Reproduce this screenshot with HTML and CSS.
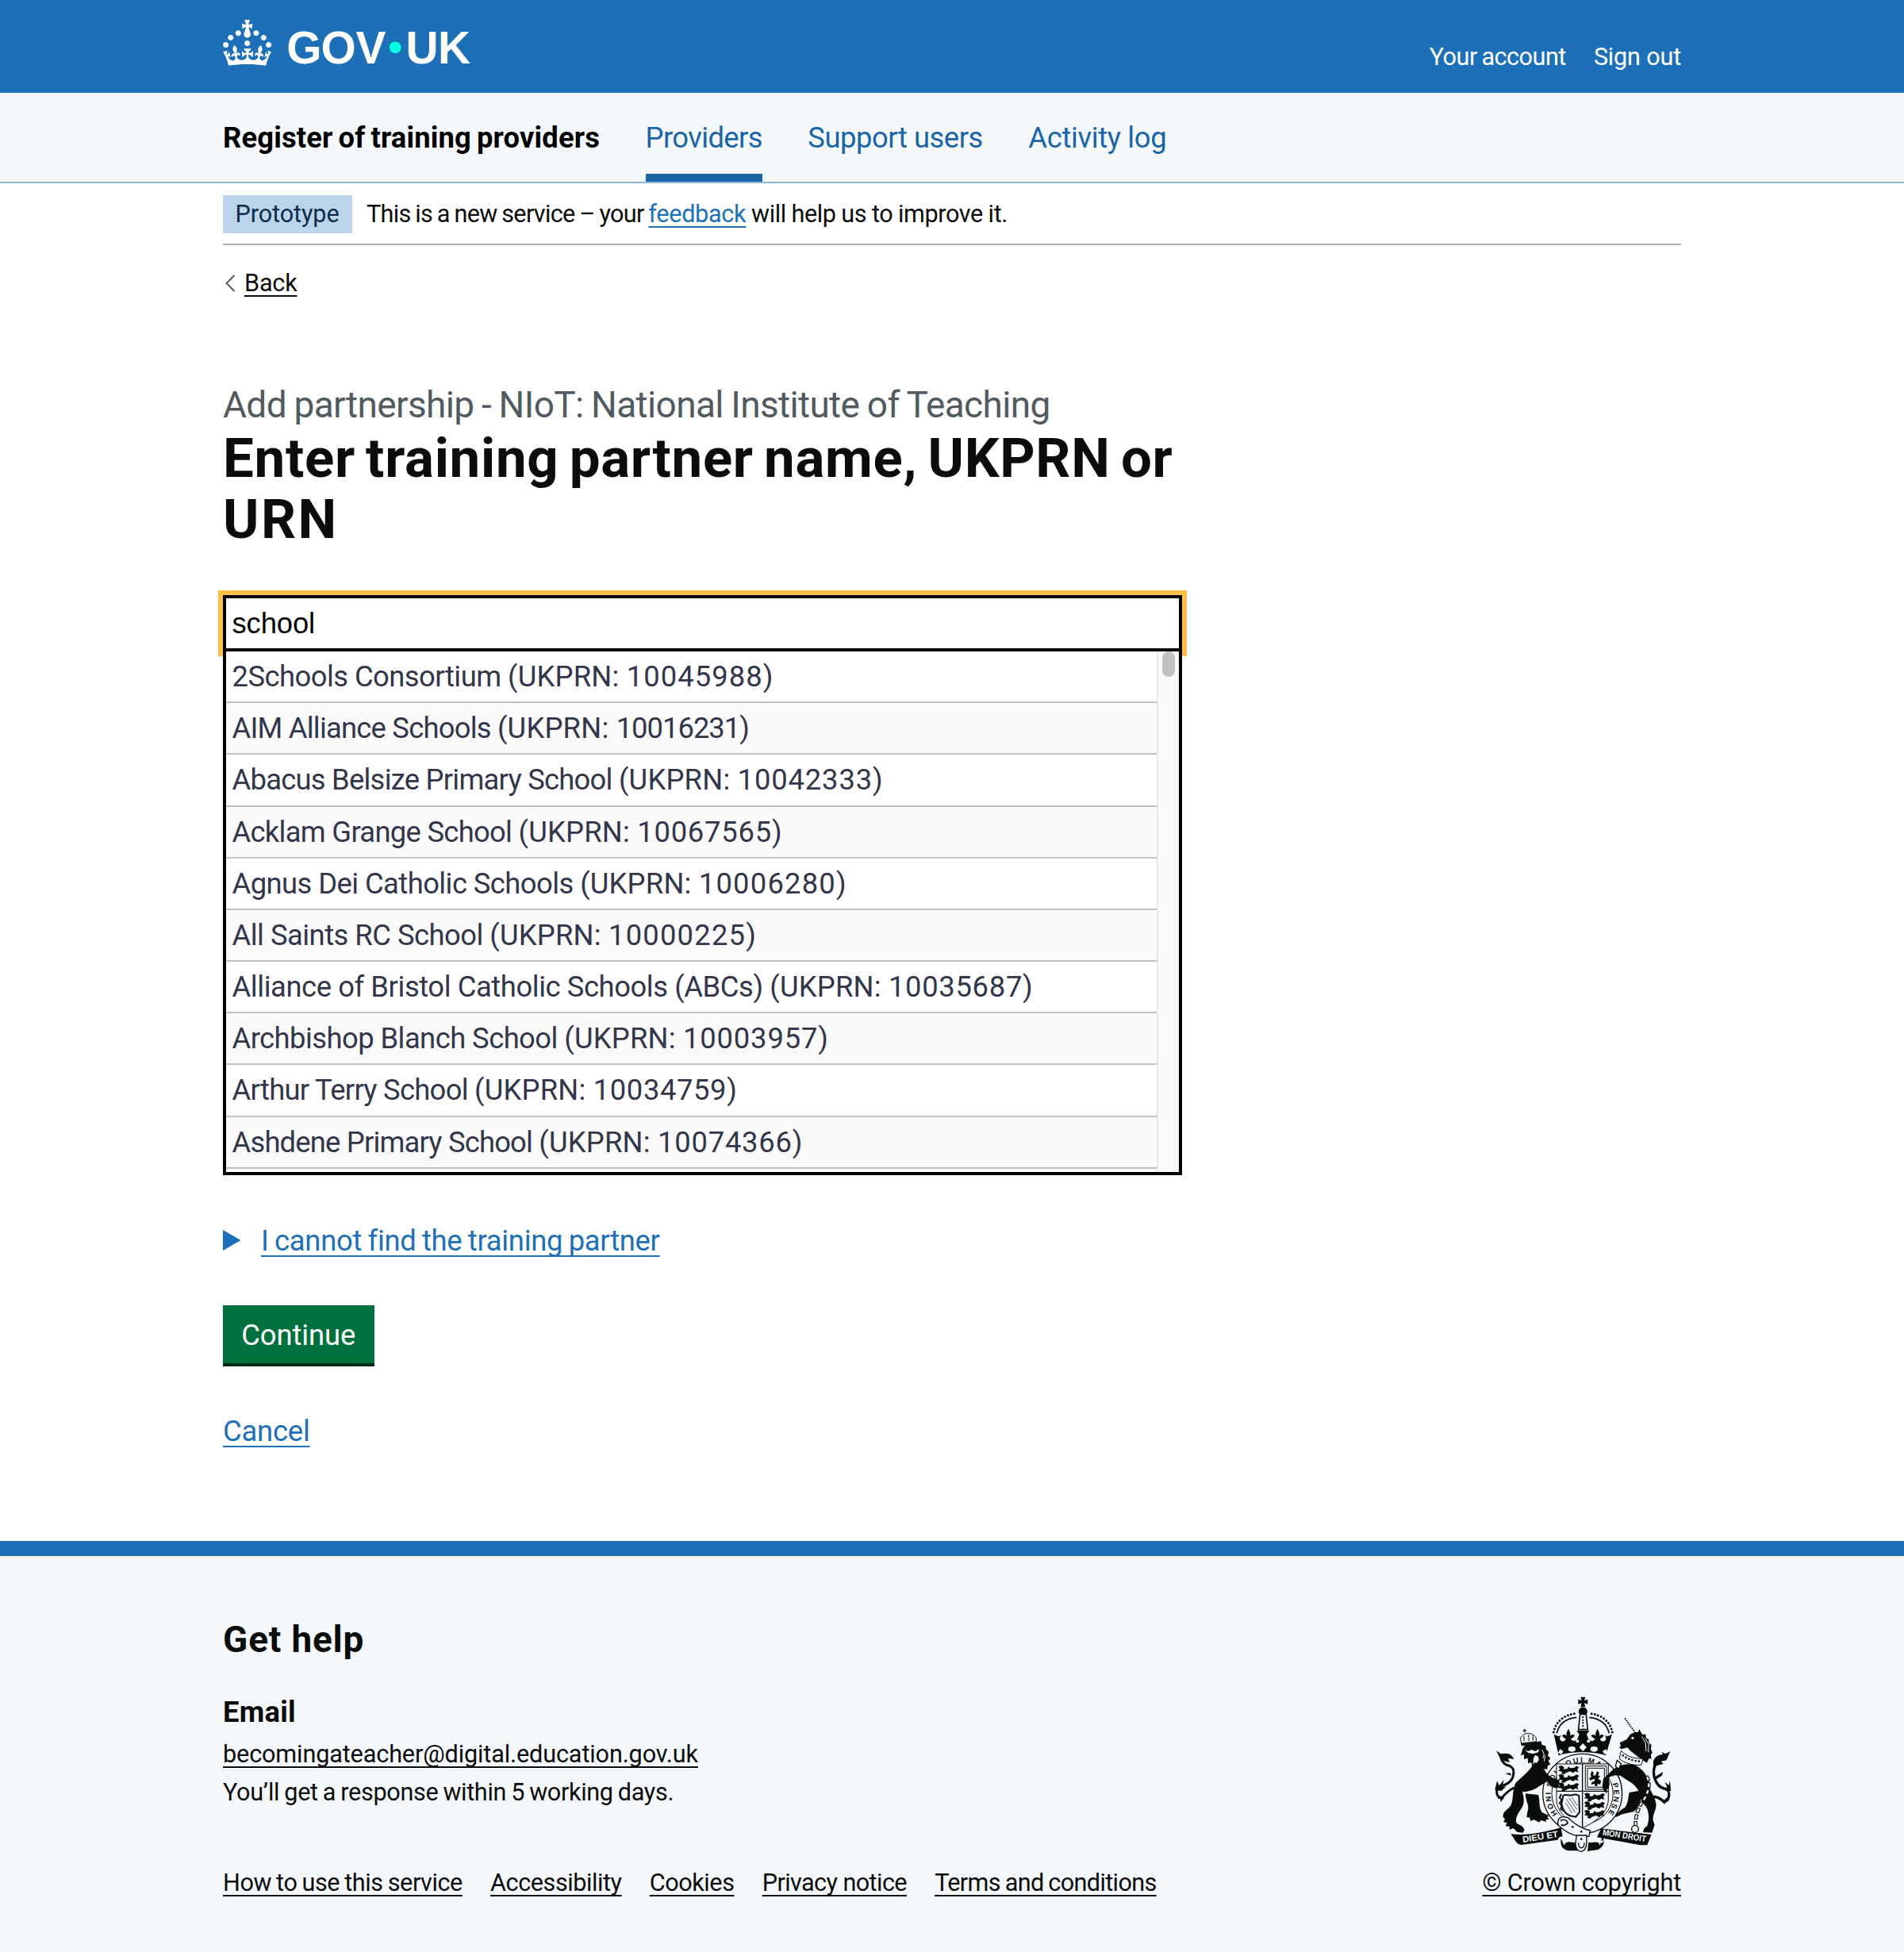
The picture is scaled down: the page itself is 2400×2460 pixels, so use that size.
FILE: index.html
```
<!DOCTYPE html>
<html lang="en">
<head>
<meta charset="utf-8">
<title>Enter training partner name, UKPRN or URN - Register of training providers</title>
<link rel="stylesheet" href="styles.css">
</head>
<body>
<header class="header">
  <div class="container header-row">
    <svg class="logo" viewBox="0 0 320 60" role="img" aria-label="GOV.UK">
      <path transform="scale(1.915)" fill="#fff" d="M22.6 10.4c-1 .4-2-.1-2.4-1-.4-.9.1-2 1-2.4.9-.4 2 .1 2.4 1s-.1 2-1 2.4m-5.9 6.7c-.9.4-2-.1-2.4-1-.4-.9.1-2 1-2.4.9-.4 2 .1 2.4 1s-.1 2-1 2.4m10.8-3.7c-1 .4-2-.1-2.4-1-.4-.9.1-2 1-2.4.9-.4 2 .1 2.4 1s0 2-1 2.4m3.3 4.8c-1 .4-2-.1-2.4-1-.4-.9.1-2 1-2.4.9-.4 2 .1 2.4 1s-.1 2-1 2.4M17 4.7l2.3 1.2V2.5l-2.3.7-.2-.2.9-3h-3.4l.9 3-.2.2c-.1.1-2.3-.7-2.3-.7v3.4L15 4.7c.1.1.1.2.2.2l-1.3 4c-.1.2-.1.4-.1.6 0 1.1.8 2 1.9 2.2h.7c1-.2 1.9-1.1 1.9-2.1 0-.2 0-.4-.1-.6l-1.3-4c-.1-.2 0-.2.1-.3m-7.6 5.7c.9.4 2-.1 2.4-1 .4-.9-.1-2-1-2.4-.9-.4-2 .1-2.4 1s0 2 1 2.4m-5 3c.9.4 2-.1 2.4-1 .4-.9-.1-2-1-2.4-.9-.4-2 .1-2.4 1s.1 2 1 2.4m-3.2 4.8c.9.4 2-.1 2.4-1 .4-.9-.1-2-1-2.4-.9-.4-2 .1-2.4 1s0 2 1 2.4m14.8 11c4.4 0 8.6.3 12.3.8 1.1-4.5 2.4-7 3.7-8.8l-2.5-.9c.2 1.3.3 1.9 0 2.7-.4-.4-.8-1.1-1.1-2.3l-1.2 4c.7-.5 1.3-.8 2-.9-1.1 2.5-2.6 3.1-3.5 3-1.1-.2-1.7-1.2-1.5-2.1.3-1.2 1.5-1.5 2.1-.1 1.1-2.3-.8-3-2-2.3 1.9-1.9 2.1-3.5.6-5.6-2.1 1.6-2.1 3.2-1.2 5.5-1.2-1.4-3.2-.6-2.5 1.6.9-1.4 2.1-.5 1.9.8-.2 1.1-1.7 2.1-3.5 1.9-2.7-.2-2.9-2.1-2.9-3.6.7-.1 1.9.5 2.9 1.9l.4-4.3c-1.1 1.1-2.1 1.4-3.2 1.4.4-1.2 2.1-3 2.1-3h-5.4s1.7 1.9 2.1 3c-1.1 0-2.1-.2-3.2-1.4l.4 4.3c1-1.4 2.2-2 2.9-1.9-.1 1.5-.2 3.4-2.9 3.6-1.9.2-3.4-.8-3.5-1.9-.2-1.3 1-2.2 1.9-.8.7-2.3-1.2-3-2.5-1.6.9-2.2.9-3.9-1.2-5.5-1.5 2-1.3 3.7.6 5.6-1.2-.7-3.1 0-2 2.3.6-1.4 1.8-1.1 2.1.1.2.9-.3 1.9-1.5 2.1-.9.2-2.4-.5-3.5-3 .6 0 1.2.3 2 .9l-1.2-4c-.3 1.1-.7 1.9-1.1 2.3-.3-.8-.2-1.4 0-2.7l-2.9.9C1.3 23 2.6 25.5 3.7 30c3.7-.5 7.9-.8 12.3-.8"/>
      <text class="logo-text" y="54.8" x="80.2 123.5 167.5">GOV</text>
      <circle cx="217.2" cy="34.8" r="7.4" fill="#00ffe0"/>
      <text class="logo-text" y="54.8" x="230.6 271">UK</text>
    </svg>
    <nav class="account">
      <a class="account-name" href="#">Your account</a>
      <a class="account-out" href="#">Sign out</a>
    </nav>
  </div>
</header>

<div class="service">
  <nav class="container service-row">
    <a class="service-name" href="#">Register of training providers</a>
    <a class="service-link is-active" href="#">Providers</a>
    <a class="service-link link-users" href="#">Support users</a>
    <a class="service-link link-log" href="#">Activity log</a>
  </nav>
</div>

<div class="container">
  <div class="phase">
    <strong class="tag">Prototype</strong>
    <p class="phase-text">This is a new service – your <a class="link phase-link" href="#">feedback</a><span class="phase-tail"> will help us to improve it.</span></p>
  </div>

  <div class="back">
    <svg class="chevron" viewBox="0 0 27 24"><path d="M14.5 2 4.5 12l10 10" fill="none" stroke="#505a5f" stroke-width="2"/></svg>
    <a class="back-link" href="#">Back</a>
  </div>

  <main class="main">
    <h1 class="title">
      <span class="caption">Add partnership - NIoT: National Institute of Teaching</span>
      <span class="heading">Enter training partner name, UKPRN or <span class="urn">URN</span></span>
    </h1>

    <div class="autocomplete">
      <div class="field">school</div>
      <div class="menu">
        <ul class="options">
          <li class="option">2Schools Consortium <span class="ref">(UKPRN: <span class="num">10045988)</span></span></li>
          <li class="option">AIM Alliance Schools <span class="ref">(UKPRN: <span class="num">10016231)</span></span></li>
          <li class="option">Abacus Belsize Primary School <span class="ref">(UKPRN: <span class="num">10042333)</span></span></li>
          <li class="option">Acklam Grange School <span class="ref">(UKPRN: <span class="num">10067565)</span></span></li>
          <li class="option">Agnus Dei Catholic Schools <span class="ref">(UKPRN: <span class="num">10006280)</span></span></li>
          <li class="option">All Saints RC School <span class="ref">(UKPRN: <span class="num">10000225)</span></span></li>
          <li class="option">Alliance of Bristol Catholic Schools (ABCs) <span class="ref">(UKPRN: <span class="num">10035687)</span></span></li>
          <li class="option">Archbishop Blanch School <span class="ref">(UKPRN: <span class="num">10003957)</span></span></li>
          <li class="option">Arthur Terry School <span class="ref">(UKPRN: <span class="num">10034759)</span></span></li>
          <li class="option">Ashdene Primary School <span class="ref">(UKPRN: <span class="num">10074366)</span></span></li>
        </ul>
        <div class="scrollbar"><div class="thumb"></div></div>
      </div>
    </div>

    <div class="details">
      <svg class="triangle" viewBox="0 0 23 26"><path d="M0 0 22.5 13 0 26z" fill="#1d70b8"/></svg>
      <a class="link details-link" href="#">I cannot find the training partner</a>
    </div>

    <button class="button">Continue</button>
    <div class="cancel"><a class="link cancel-link" href="#">Cancel</a></div>
  </main>
</div>

<footer class="footer">
  <div class="container footer-row">
    <div class="footer-main">
      <h2 class="help">Get help</h2>
      <h3 class="email">Email</h3>
      <p class="footer-line"><a class="dark-link email-link" href="#">becomingateacher@digital.education.gov.uk</a></p>
      <p class="footer-line reply">You’ll get a response within 5 working days.</p>
      <nav class="footer-links">
        <a class="dark-link link-how" href="#">How to use this service</a>
        <a class="dark-link" href="#">Accessibility</a>
        <a class="dark-link" href="#">Cookies</a>
        <a class="dark-link link-privacy" href="#">Privacy notice</a>
        <a class="dark-link link-terms" href="#">Terms and conditions</a>
      </nav>
    </div>
    <div class="copyright">
      <svg class="crest" viewBox="130 80 670 595" fill="#0b0c0c">
        <defs>
          <path id="ring" d="M371 527A120 120 0 1 1 556 530"/>
        </defs>
        <!-- garter and shield -->
        <circle cx="465" cy="450" r="150" fill="#f4f8fb" stroke="#0b0c0c" stroke-width="4"/>
        <circle cx="465" cy="450" r="116" fill="none" stroke="#0b0c0c" stroke-width="3"/>
        <text class="motto"><textPath href="#ring" textLength="535">HONI SOIT QUI MAL Y PENSE</textPath></text>
        <path d="M367 338H563V470C563 520 520 555 465 580C410 555 367 520 367 470Z" fill="#f4f8fb" stroke="#0b0c0c" stroke-width="3"/>
        <path d="M465 338V580M367 441H563" stroke="#0b0c0c" stroke-width="4"/>
        <path d="M476 346h80v88h-80zM484 354h64v72h-64z" fill="none" stroke="#0b0c0c" stroke-width="3"/>
        <path d="M500 364l8 8-4 8 10 2 6-16 8 4-4 12 8 2-8 10 12 8-4 14-10-4 0 10-12-2 2-8-14 4 2-8 12-6-2-8-14 6-6-8 8-4-2-10z"/>
        <g id="lions">
          <path d="M374 348l12-4 10 6-2 8 14-2 4-8 8 6 14-2 8-6 10 4-6 10 4 10-12-4-8 6-12-6-16 6-6 6-12-4 6-6-16-4 6-6z"/>
          <path d="M374 380l12-4 10 6-2 8 14-2 4-8 8 6 14-2 8-6 10 4-6 10 4 10-12-4-8 6-12-6-16 6-6 6-12-4 6-6-16-4 6-6z"/>
          <path d="M374 412l12-4 10 6-2 8 14-2 4-8 8 6 14-2 8-6 10 4-6 10 4 10-12-4-8 6-12-6-16 6-6 6-12-4 6-6-16-4 6-6z"/>
        </g>
        <use href="#lions" x="98" y="103"/>
        <path d="M392 458c12-8 22 2 34-2 10-4 18-4 26 2l2 62-14 18-22-4c-16-6-28-22-32-44z" fill="#f4f8fb" stroke="#0b0c0c" stroke-width="6"/>
        <path d="M404 470l34 52M414 466l30 44M424 464l22 32M402 486l24 38" stroke="#0b0c0c" stroke-width="2"/>
        <path d="M385 452l-6 14 8 8-8 12 8 10-4 12 12 8" fill="none" stroke="#0b0c0c" stroke-width="6"/>
        <!-- crown -->
        <path d="M458 85h18l-4 13 13-4v18l-13-4 4 14h-18l4-14-13 4v-18l13 4z"/>
        <path d="M450 143c0-26 34-26 34 0l-6 8h-22z"/>
        <path d="M456 150h23l6 58h-35z" fill="#f4f8fb" stroke="#0b0c0c" stroke-width="5"/>
        <path d="M467 158v46" stroke="#0b0c0c" stroke-width="6" stroke-dasharray="6 5"/>
        <path d="M356 218C364 180 392 152 442 147M578 218C570 180 542 152 492 147" fill="none" stroke="#0b0c0c" stroke-width="9" stroke-linecap="round" stroke-dasharray="0 12.5"/>
        <path d="M368 222C376 188 402 166 443 162M566 222C558 188 532 166 491 162" fill="none" stroke="#0b0c0c" stroke-width="5"/>
        <path d="M357 226l18 8 8-4-4 14c8 14 20 10 24-2-8 0-10-8-16-10 6-8 14-6 18 0-2-10 2-18 7-27 5 9 9 17 7 27 4-6 12-8 18 0-6 2-8 10-16 10 4 12 18 12 26 0l6-16-10-14h48l-10 14 6 16c8 12 22 12 26 0-8 0-10-8-16-10 6-8 14-6 18 0-2-10 2-18 7-27 5 9 9 17 7 27 4-6 12-8 18 0-6 2-8 10-16 10 4 12 16 16 24 2l-4-14 8 4 18-8-24 80c-46-16-132-16-178 0z"/>
        <g fill="#f4f8fb"><ellipse cx="425" cy="282" rx="14" ry="10"/><ellipse cx="509" cy="282" rx="14" ry="10"/><path d="M467 260l14 15-14 15-14-15zM380 282l13 8-8 12-12-6zM554 282l-13 8 8 12 12-6z"/><circle cx="446" cy="252" r="6"/><circle cx="488" cy="252" r="6"/></g>
        <!-- lion -->
        <path d="M276 345c-14 22-42 44-64 66-14 28-6 60-18 84-10 16-28 20-30 42l8 10-6 10 14 4-6 12 16 2-2 12 16-6 14 14 22 3 6-12-8-12-22-12c-8-22 10-42 22-62 10-22 4-38 0-56 26-2 44-8 60-20l34-20c12 22 30 30 48 22l-6-10 8-2-6-10 6-4-26-8c-24-10-36-28-42-50z"/>
        <path d="M250 450l48 5c8 22 0 46 14 66l26 12-6 8 8 6-14 2 2 8-20-6-6 8-20-10-14 4-2-12-12-2 4-24c8-22-10-38-8-65z"/>
        <path d="M240 278l-8 28 12-4 0 18 14-4 2 20 12-4 4 26 14 4 10 8 12-14 20 2 2-14 10-4-8-14 8-8-10-12 4-14-10-8-2-14-14-4-4-14-52 8z"/>
        <path d="M246 284l14 6 12-6 14 6 16-8-4 12-20 6-18-4zM280 316l6-12 12 6 2 14-8 10-8-2-6 10z" fill="#f4f8fb"/>
        <path d="M312 284l8 18-4 14M324 306l-4 22" fill="none" stroke="#f4f8fb" stroke-width="3"/>
        <path d="M236 268l-6-26c8-16 22-20 30-20s22 4 30 18l0 24z" fill="#f4f8fb" stroke="#0b0c0c" stroke-width="3"/>
        <path d="M236 268l54-6-2-8-54 6zM244 252v-18M262 250v-24M278 248v-18M240 212h14M247 206v16" stroke="#0b0c0c" stroke-width="4" stroke-dasharray="5 2"/>
        <path d="M206 428c-24 12-36 26-48 40-22-8-22-38-4-44 22-8 46-16 50-46 4-24-8-32-26-36-14-8-20-20-22-32" fill="none" stroke="#0b0c0c" stroke-width="9"/>
        <path d="M140 288l16 12 20-2c14 0 26 10 30 22l-22-4 6 16-24-6c-12-6-18-18-26-38zM134 436l8-34 8 18 18-22-6 28 16-4-20 18zM148 458l-4 12 10-2 2 14 14-18zM196 382l-24-8 20-2z"/>
        <!-- unicorn -->
        <path d="M625 165l38 52" stroke="#0b0c0c" stroke-width="5" stroke-dasharray="6 3"/>
        <path d="M606 258l4 12-6 6 8 6 24-6 8 10 30 24 34 24 10-18 8 4-2-18 6-6-6-14 2-16-10-8 0-12-10-6-2-14-12 0-6-8-6-12-4 12-14 0-16 8-14 20z"/>
        <circle cx="655" cy="240" r="5" fill="#f4f8fb"/>
        <path d="M690 234l14 26 2 30M702 240l14 24-2 30" fill="none" stroke="#f4f8fb" stroke-width="3"/>
        <path d="M612 288c20 22 46 30 82 30l-6 24c-34 2-62-6-84-24z" fill="#f4f8fb" stroke="#0b0c0c" stroke-width="3"/>
        <path d="M616 304c20 16 42 24 72 24" fill="none" stroke="#0b0c0c" stroke-width="7" stroke-dasharray="7 6"/>
        <path d="M574 366c18-20 60-38 98-20 30 20 50 50 50 90 6 12 20 34 22 56 0 22-14 36-12 58l6 18-10 30-34-2 4-14 12-10c8-24 8-50-4-72-14-14-22-26-26-50-4-18-18-34-42-48l-30-20-34-2-10 12 4 20-4 18-8 6 2 14-10-8-8-18 4-30z"/>
        <path d="M642 446l48-8c-2 36-8 62-30 80l-44 10-26 12 4-14 20-16 12-8c12-16 12-36 16-56z"/>
        <path d="M596 325l-6 22 12 10 10-20z" fill="#f4f8fb" stroke="#0b0c0c" stroke-width="4"/>
        <path d="M728 462c18-2 34 8 46 20 22-6 26-46 4-50-24-4-36-24-42-48-4-20 0-44 14-54" fill="none" stroke="#0b0c0c" stroke-width="10"/>
        <path d="M797 290l-14 34-20 4 8 10-24 6-14 12 0-28c6-18 22-26 36-26l-4-10 14 8zM796 400l4 40-18 0-14-10 18-4-10-20 16 12zM770 478l6 14 4-14 12 0-6-14zM740 386l30-18-4 14-22 14z"/>
        <path d="M708 384c20 36 0 76-22 106-14 26-20 50-20 80" fill="none" stroke="#0b0c0c" stroke-width="14" stroke-dasharray="20 6"/>
        <path d="M708 384c20 36 0 76-22 106-14 26-20 50-20 80" fill="none" stroke="#f4f8fb" stroke-width="7" stroke-dasharray="14 12" stroke-dashoffset="-3"/>
        <circle cx="664" cy="584" r="13" fill="none" stroke="#0b0c0c" stroke-width="4"/>
        <!-- scroll -->
        <path d="M194 603c60 8 120-6 190-24l6 34c-8-2-16 2-18 12l-138 19c-18 0-24-20-40-41zM536 582l190 23-16 40-26 0-164-30z"/>
        <path d="M384 620c-4 26 4 42 30 46l34 0-8-30-22-4c-14 0-20 8-22 14M540 612c12 20 6 40-16 50l-40 6 4-34 24-2c16 0 20 10 18 18"/>
        <path d="M388 622c18 6 44 4 56 8l-6 6c-18-4-36-4-44 2zM548 626c-16 4-48 2-58 4l4 6c22-4 38-2 44 2z" fill="#f4f8fb"/>
        <text class="scroll-text" transform="translate(240 635) rotate(-9)" textLength="136" lengthAdjust="spacingAndGlyphs">DIEU ET</text>
        <text class="scroll-text" transform="translate(540 607) rotate(9)" textLength="166" lengthAdjust="spacingAndGlyphs">MON DROIT</text>
        <!-- strap and buckle -->
        <path d="M376 546c10-12 34-10 44 4 28 24 50 34 74 40l-4 22h-34c-30-4-56-18-76-36-10-6-10-20-4-30z" fill="#f4f8fb" stroke="#0b0c0c" stroke-width="4"/>
        <path d="M382 554c10-10 24-4 28 6-8 10-18 12-26 8" fill="none" stroke="#0b0c0c" stroke-width="5"/>
        <path d="M443 608h38v26c0 46-42 46-42 4z" fill="#f4f8fb" stroke="#0b0c0c" stroke-width="4"/>
        <path d="M450 636c-2 26 24 26 22 0" fill="none" stroke="#0b0c0c" stroke-width="4"/>
        <circle cx="428" cy="576" r="4"/><circle cx="461" cy="594" r="4"/><circle cx="461" cy="622" r="4"/>
      </svg>
      <a class="dark-link copyright-link" href="#">© Crown copyright</a>
    </div>
  </div>
</footer>
</body>
</html>
```
FILE: styles.css
```
* { box-sizing: border-box; }
body {
  margin: 0;
  background: #fff;
  color: #0b0c0c;
  font-family: Roboto, "Liberation Sans", sans-serif;
  font-size: 36.4px;
  line-height: 48px;
}
h1, h2, h3, p, ul { margin: 0; padding: 0; }
a { color: inherit; text-decoration: none; white-space: nowrap; }
.container { width: 1838px; margin: 0 auto; }

.link, .dark-link, .back-link {
  text-decoration: underline;
  text-decoration-thickness: 2px;
  text-underline-offset: 5px;
  text-decoration-skip-ink: none;
}
.link { color: #1d70b8; }

.header { height: 117px; background: #1d70b8; color: #fff; }
.header-row { display: flex; justify-content: space-between; align-items: flex-start; }
.logo { width: 320px; height: 60px; margin-top: 24.5px; overflow: visible; }
.logo-text { font: bold 57px "Liberation Sans", Arial, sans-serif; fill: #fff; }
.account { display: flex; gap: 35px; padding-top: 47.5px; font-size: 30.64px; }
.account-name { letter-spacing: -.5px; word-spacing: -1.5px; }
.account-out { letter-spacing: -.2px; }

.service { background: #f4f8fb; border-bottom: 2px solid #8eb8dc; }
.service-row { display: flex; gap: 57.5px; height: 112px; }
.service-row a { height: 112px; padding-top: 10px; line-height: 93px; }
.service-name { color: #000; font-weight: 700; letter-spacing: .15px; word-spacing: -2.2px; }
.service-link { color: #1a65a6; letter-spacing: -.48px; }
.service-row .is-active { border-bottom: 10px solid #1a65a6; letter-spacing: -.62px; }
.service-row .link-log { letter-spacing: -.35px; }

.phase {
  display: flex;
  gap: 18px;
  padding: 15px 0 13px;
  border-bottom: 2px solid #b1b4b6;
  font-size: 30.64px;
  line-height: 47px;
}
.tag {
  width: 163px;
  height: 48px;
  padding-left: 15.5px;
  background: #bbd4ea;
  color: #0c2d4a;
  font-weight: 400;
  letter-spacing: -.11px;
}
.phase-text { height: 48px; letter-spacing: -.7px; word-spacing: -1.2px; white-space: nowrap; }
.phase-link { letter-spacing: -.3px; }
.phase-tail { letter-spacing: -.4px; word-spacing: -.5px; }

.back { display: flex; align-items: center; margin-top: 24px; font-size: 30.64px; letter-spacing: -.2px; }
.chevron { width: 27px; height: 24px; }

.main { width: 1209px; margin-top: 100px; }
.title { font-weight: 400; }
.caption {
  display: block;
  color: #505a5f;
  font-size: 46px;
  line-height: 58px;
  letter-spacing: -.65px;
  word-spacing: -1.2px;
}
.heading {
  display: block;
  margin-top: 1px;
  font-size: 69px;
  font-weight: 700;
  line-height: 76.6px;
  letter-spacing: .7px;
  word-spacing: -4.6px;
}
.urn { letter-spacing: 2.4px; }

.autocomplete { margin-top: 56.8px; }
.field {
  height: 71px;
  padding-left: 7.5px;
  border: 4px solid #000;
  box-shadow: 0 0 0 6px #ffbf47;
  color: #000;
  font-family: "Liberation Sans", Arial, sans-serif;
  line-height: 64px;
  letter-spacing: -.1px;
}
.menu {
  position: relative;
  display: flex;
  height: 660px;
  border: 4px solid #000;
  border-top: 0;
  background: #fff;
}
.options { flex: 1; list-style: none; }
.option {
  height: 65.2px;
  padding-left: 7.5px;
  border-bottom: 2px solid #bfc1c3;
  color: #32364a;
  line-height: 63.2px;
  white-space: nowrap;
}
.option:nth-child(even) { background: #fafafa; }
.ref { letter-spacing: .2px; }
.option:nth-child(1) { letter-spacing: -.54px; --digits: 1.05px; }
.option:nth-child(2) { letter-spacing: -.78px; --digits: -1px; }
.option:nth-child(3) { letter-spacing: -.76px; --digits: .84px; }
.option:nth-child(4) { letter-spacing: -.71px; --digits: .76px; }
.option:nth-child(5) { letter-spacing: -.57px; --digits: 1.2px; }
.option:nth-child(6) { letter-spacing: -.52px; --digits: 1.2px; }
.option:nth-child(7) { letter-spacing: -.43px; --digits: .69px; }
.option:nth-child(8) { letter-spacing: -.56px; --digits: .84px; }
.option:nth-child(9) { letter-spacing: -.73px; --digits: .6px; }
.option:nth-child(10) { letter-spacing: -.82px; --digits: .78px; }
.num { letter-spacing: var(--digits); }
.scrollbar { width: 28px; padding-left: 5px; border-left: 2px solid #e8e8e8; background: #fafafa; }
.thumb { width: 16px; height: 32px; border-radius: 8px; background: #c1c1c1; }

.details { display: flex; align-items: center; gap: 25px; margin-top: 59px; }
.triangle { width: 23px; height: 26px; margin-bottom: 2px; }
.details-link, .cancel-link { text-underline-offset: 6px; }
.details-link { letter-spacing: -.3px; word-spacing: -1.2px; }
.button {
  display: block;
  width: 190.5px;
  height: 73px;
  margin-top: 57px;
  padding: 1px 0 0;
  border: 0;
  background: #00703c;
  box-shadow: 0 4px 0 #002d18;
  color: #fff;
  font: 36.4px/73px Roboto, sans-serif;
  letter-spacing: -.1px;
}
.cancel { margin-top: 62px; letter-spacing: -.2px; }

.footer {
  height: 518px;
  margin-top: 114px;
  padding-top: 76px;
  border-top: 19px solid #1d70b8;
  background: #f4f8fb;
  font-size: 30.64px;
}
.footer-row { display: flex; justify-content: space-between; align-items: flex-end; }
.help { font-size: 46px; line-height: 58px; letter-spacing: .8px; }
.email { margin: 39px 0 5px; font-size: 36.4px; letter-spacing: .25px; }
.email-link { letter-spacing: -.14px; }
.reply { letter-spacing: -.35px; word-spacing: -1.1px; }
.footer-links { display: flex; gap: 35.2px; margin-top: 66px; letter-spacing: -.45px; }
.link-how { letter-spacing: -.45px; word-spacing: -1px; }
.link-privacy { letter-spacing: -.6px; }
.link-terms { letter-spacing: -.65px; word-spacing: -1.2px; }
.copyright { display: flex; flex-direction: column; align-items: flex-end; }
.crest { width: 223.3px; height: 198.3px; margin: 0 12.5px 13.5px 0; }
.motto { font: bold 28px "Liberation Sans", sans-serif; }
.scroll-text { font: bold 33px "Liberation Sans", sans-serif; fill: #f4f8fb; }
.copyright-link { letter-spacing: -.18px; }
```
